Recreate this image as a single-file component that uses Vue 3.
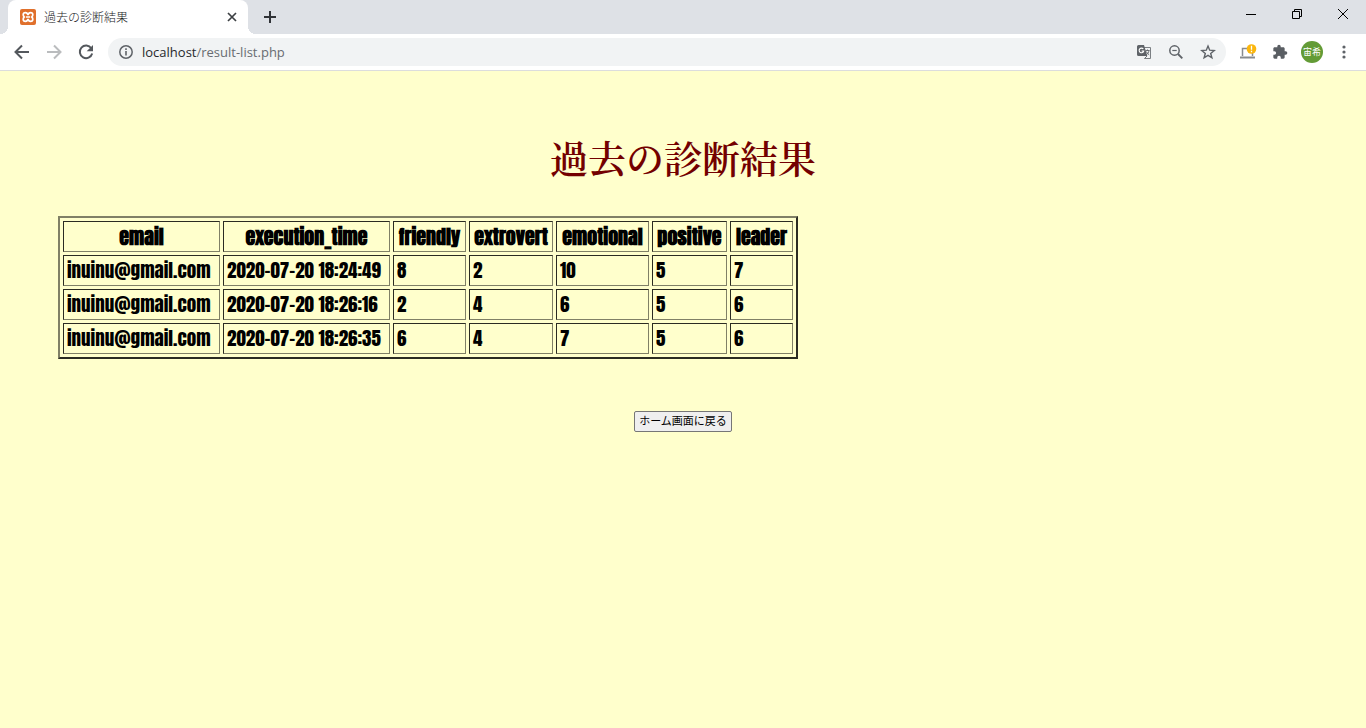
<script setup>
const columns = [
  { name: 'email', cls: 'c-email' },
  { name: 'execution_time', cls: 'c-time' },
  { name: 'friendly', cls: 'c-friendly' },
  { name: 'extrovert', cls: 'c-extrovert' },
  { name: 'emotional', cls: 'c-emotional' },
  { name: 'positive', cls: 'c-positive' },
  { name: 'leader', cls: 'c-leader' },
]
const rows = [
  ['inuinu@gmail.com', '2020-07-20 18:24:49', 8, 2, 10, 5, 7],
  ['inuinu@gmail.com', '2020-07-20 18:26:16', 2, 4, 6, 5, 6],
  ['inuinu@gmail.com', '2020-07-20 18:26:35', 6, 4, 7, 5, 6],
]
</script>

<template>
  <div class="browser">
    <header class="tabstrip">
      <div class="tab">
        <svg class="favicon" width="16" height="16" viewBox="0 0 16 16" aria-hidden="true">
          <rect width="16" height="16" rx="2" fill="#e0702c" />
          <path d="M8 6C7.600 4.200 6.600 3.600 5.400 3.600 4 3.600 3.200 4.500 3.200 5.800c0 1 .4 1.700 1 2.200-.6.500-1 1.200-1 2.200 0 1.300.8 2.200 2.200 2.200C6.600 12.400 7.600 11.800 8 10c.4 1.800 1.400 2.400 2.600 2.400 1.400 0 2.200-.9 2.200-2.200 0-1-.4-1.700-1-2.200.6-.5 1-1.200 1-2.200 0-1.300-.8-2.200-2.200-2.200C9.400 3.600 8.400 4.200 8 6zM6 8h4" fill="none" stroke="#fff" stroke-width="1.700" />
        </svg>
        <span class="tab-title">過去の診断結果</span>
        <button class="tab-close" aria-label="Close tab">
          <svg width="10" height="10" viewBox="0 0 10 10"><path d="M1 1l8 8M9 1L1 9" stroke="#3c4043" stroke-width="1.700" /></svg>
        </button>
      </div>
      <button class="new-tab" aria-label="New tab">
        <svg width="12" height="12" viewBox="0 0 12 12"><path d="M6 0v12M0 6h12" stroke="#303337" stroke-width="2" /></svg>
      </button>
      <div class="window-buttons">
        <button aria-label="Minimize"><svg width="10" height="10" viewBox="0 0 10 10"><path d="M0 5.500h10" stroke="#000" /></svg></button>
        <button aria-label="Restore"><svg width="10" height="10" viewBox="0 0 10 10"><path d="M.5 2.500h7v7h-7zM2.500 2.500v-2h7v7h-2" fill="none" stroke="#000" /></svg></button>
        <button aria-label="Close"><svg width="10" height="10" viewBox="0 0 10 10"><path d="M0 0l10 10M10 0L0 10" stroke="#000" /></svg></button>
      </div>
    </header>

    <nav class="toolbar" aria-label="Browser toolbar">
      <button class="nav-button" aria-label="Back">
        <svg width="16" height="16" viewBox="0 0 16 16"><path d="M15 8H2M8 1.500L1.500 8 8 14.500" fill="none" stroke="#54585d" stroke-width="2" /></svg>
      </button>
      <button class="nav-button" aria-label="Forward">
        <svg width="16" height="16" viewBox="0 0 16 16"><path d="M1 8h13M8 1.500L14.500 8 8 14.500" fill="none" stroke="#babcbe" stroke-width="2" /></svg>
      </button>
      <button class="nav-button" aria-label="Reload">
        <svg width="16" height="16" viewBox="0 0 16 16"><path d="M13.300 4.200A6.300 6.300 0 1 0 14.200 9.500" fill="none" stroke="#54585d" stroke-width="2" /><path d="M15 1v6.300H8.700z" fill="#54585d" /></svg>
      </button>
      <div class="omnibox">
        <svg width="14" height="14" viewBox="0 0 14 14" aria-hidden="true"><circle cx="7" cy="7" r="6.200" fill="none" stroke="#5f6368" stroke-width="1.500" /><path d="M7 6v4.500M7 3.300v1.600" stroke="#5f6368" stroke-width="1.600" /></svg>
        <span class="url">localhost<span class="path">/result-list.php</span></span>
        <button class="box-button" aria-label="Translate">
          <svg width="16" height="16" viewBox="0 0 16 16">
            <path d="M6.500 3.500h8v11h-6" fill="#f1f3f4" stroke="#7b7f83" />
            <path d="M1.500 1H8l3.300 11H2.500A1.500 1.500 0 0 1 1 10.500v-8A1.500 1.500 0 0 1 2.500 1z" fill="#5f6368" />
            <path d="M7.300 5A2.300 2.300 0 1 0 7.700 7H5.600" fill="none" stroke="#fff" stroke-width="1.100" />
            <path d="M9.500 6.500h4M11.500 5.500v1M13 6.500c-.3 2-1.300 3.500-2.800 4.500M10.300 7.500c.6 1.500 1.500 2.500 2.900 3.300M8.500 14.500l2.500-2.500" fill="none" stroke="#5f6368" stroke-width=".9" />
          </svg>
        </button>
        <button class="box-button" aria-label="Zoom">
          <svg width="16" height="16" viewBox="0 0 16 16"><circle cx="6.500" cy="6.500" r="4.700" fill="none" stroke="#5f6368" stroke-width="1.500" /><path d="M10 10l4.300 4.300" stroke="#5f6368" stroke-width="1.900" /><path d="M4.300 6.500h4.400" stroke="#5f6368" stroke-width="1.200" /></svg>
        </button>
        <button class="box-button" aria-label="Bookmark">
          <svg width="16" height="16" viewBox="0 0 16 16"><path d="M8 2l1.700 4.200 4.500.3-3.500 2.900 1.200 4.400L8 11.400l-3.900 2.400 1.200-4.400L1.800 6.500l4.500-.3z" fill="none" stroke="#5f6368" stroke-width="1.400" /></svg>
        </button>
      </div>
      <button class="tool-button" aria-label="Extension">
        <svg width="18" height="16" viewBox="0 0 18 16"><path d="M3.500 12V4.500h10V12" fill="none" stroke="#888b8f" stroke-width="1.500" /><path d="M1 12.500h15v2H1z" fill="#888b8f" /><circle cx="12.500" cy="5" r="4.800" fill="#fbb60d" /><path d="M12.500 1.700v4M12.500 6.700v1.500" stroke="#fff" stroke-width="1.300" /></svg>
      </button>
      <button class="tool-button" aria-label="Extensions">
        <svg width="16" height="16" viewBox="0 0 24 24"><path d="M20.500 11H19V7c0-1.100-.9-2-2-2h-4V3.500a2.500 2.500 0 0 0-5 0V5H4c-1.100 0-2 .9-2 2v3.800h1.500a2.700 2.700 0 0 1 0 5.400H2V20c0 1.100.9 2 2 2h3.800v-1.500a2.700 2.700 0 0 1 5.400 0V22H17c1.100 0 2-.9 2-2v-4h1.500a2.500 2.500 0 0 0 0-5z" fill="#5a5e63" /></svg>
      </button>
      <button class="avatar" aria-label="Profile">宙希</button>
      <button class="tool-button menu" aria-label="Menu">
        <svg width="4" height="14" viewBox="0 0 4 14"><g fill="#5f6368"><circle cx="2" cy="2" r="1.600" /><circle cx="2" cy="7" r="1.600" /><circle cx="2" cy="12" r="1.600" /></g></svg>
      </button>
    </nav>

    <main class="page">
      <h1>過去の診断結果</h1>
      <table>
        <colgroup><col v-for="c in columns" :key="c.name" :class="c.cls" /></colgroup>
        <thead>
          <tr><th v-for="c in columns" :key="c.name" scope="col">{{ c.name }}</th></tr>
        </thead>
        <tbody>
          <tr v-for="row in rows" :key="row[1]"><td v-for="(v, i) in row" :key="i">{{ v }}</td></tr>
        </tbody>
      </table>
      <button class="home">ホーム画面に戻る</button>
    </main>
  </div>
</template>

<style>
body { background: #ffffcc; }
</style>

<style scoped>
.browser {
  min-height: 100vh;
  display: flex;
  flex-direction: column;
  background: #ffffcc;
  font-family: "Open Sans", "Noto Sans CJK JP", sans-serif;
}
button {
  padding: 0;
  border: 0;
  background: none;
  font-family: inherit;
}
svg { display: block; }
.tabstrip {
  height: 34px;
  display: flex;
  background: #dee1e6;
}
.tab {
  position: relative;
  width: 220px;
  margin-left: 8px;
  padding: 0 8px 0 12px;
  display: flex;
  align-items: center;
  border-radius: 8px 8px 0 0;
  background: #fff;
}
.tab::before,
.tab::after {
  content: "";
  position: absolute;
  bottom: 0;
  width: 8px;
  height: 8px;
}
.tab::before {
  right: 100%;
  background: radial-gradient(circle at 0 0, transparent 8px, #fff 8px);
}
.tab::after {
  left: 100%;
  background: radial-gradient(circle at 100% 0, transparent 8px, #fff 8px);
}
.tab-title {
  flex: 1;
  margin-left: 8px;
  font-family: "Noto Sans CJK JP", sans-serif;
  font-size: 12px;
  font-weight: 300;
  line-height: 16px;
  color: #222426;
}
.tab-close {
  padding: 3px 0;
  width: 16px;
  display: flex;
  justify-content: center;
}
.new-tab {
  width: 28px;
  margin-left: 8px;
  display: flex;
  align-items: center;
  justify-content: center;
}
.window-buttons {
  margin-left: auto;
  display: flex;
  height: 28px;
}
.window-buttons button {
  width: 46px;
  display: flex;
  align-items: center;
  justify-content: center;
}
.toolbar {
  height: 36px;
  padding: 0 6px;
  display: flex;
  align-items: center;
  background: #fff;
  border-bottom: 1px solid #dcdddd;
}
.nav-button,
.box-button,
.tool-button {
  width: 32px;
  height: 28px;
  flex: none;
  display: flex;
  align-items: center;
  justify-content: center;
}
.omnibox {
  height: 28px;
  flex: 1;
  margin: 0 6px;
  padding: 0 2px 0 11px;
  display: flex;
  align-items: center;
  border-radius: 14px;
  background: #f1f3f4;
}
.url {
  flex: 1;
  margin-left: 9px;
  font-size: 13px;
  line-height: 18px;
  color: #27292c;
}
.path { color: #686c71; }
.avatar {
  width: 22px;
  height: 22px;
  margin: 0 5px;
  border-radius: 50%;
  background: #639b36;
  color: #fff;
  font-size: 9px;
  line-height: 22px;
  text-align: center;
}
.page {
  flex: 1;
  display: flex;
  flex-direction: column;
  align-items: center;
  padding: 58px 58px 0;
}
h1 {
  margin: 0;
  font-family: "Noto Serif CJK JP", "Noto Sans CJK JP", serif;
  font-size: 38px;
  font-weight: 600;
  line-height: 56px;
  color: #730000;
}
table {
  align-self: flex-start;
  width: 740px;
  margin: 31px 0 52px;
  table-layout: fixed;
  border: 2px solid;
  border-color: #808066 #2b2b22 #2b2b22 #808066;
  border-collapse: separate;
  border-spacing: 3px;
  font-family: Impact, Anton, "Roboto Condensed", "Liberation Sans", sans-serif;
  line-height: 23px;
  color: #000;
}
th,
td {
  padding: 3px;
  border: 1px solid;
  border-color: #2b2b22 #808066 #808066 #2b2b22;
  font-size: 19px;
  font-weight: 400;
  text-align: left;
  white-space: nowrap;
}
th {
  font-size: 20px;
  font-weight: 700;
  text-align: center;
}
.c-email { width: 157px; }
.c-time { width: 167px; }
.c-friendly { width: 73px; }
.c-extrovert { width: 84px; }
.c-emotional { width: 93px; }
.c-positive { width: 75px; }
.c-leader { width: 63px; }
.home {
  height: 21px;
  padding: 0 4px 3px;
  border: 1px solid #767676;
  border-radius: 2px;
  background: #efefef;
  font-family: "Noto Sans CJK JP", sans-serif;
  font-size: 11px;
  line-height: 16px;
  color: #000;
}
</style>
